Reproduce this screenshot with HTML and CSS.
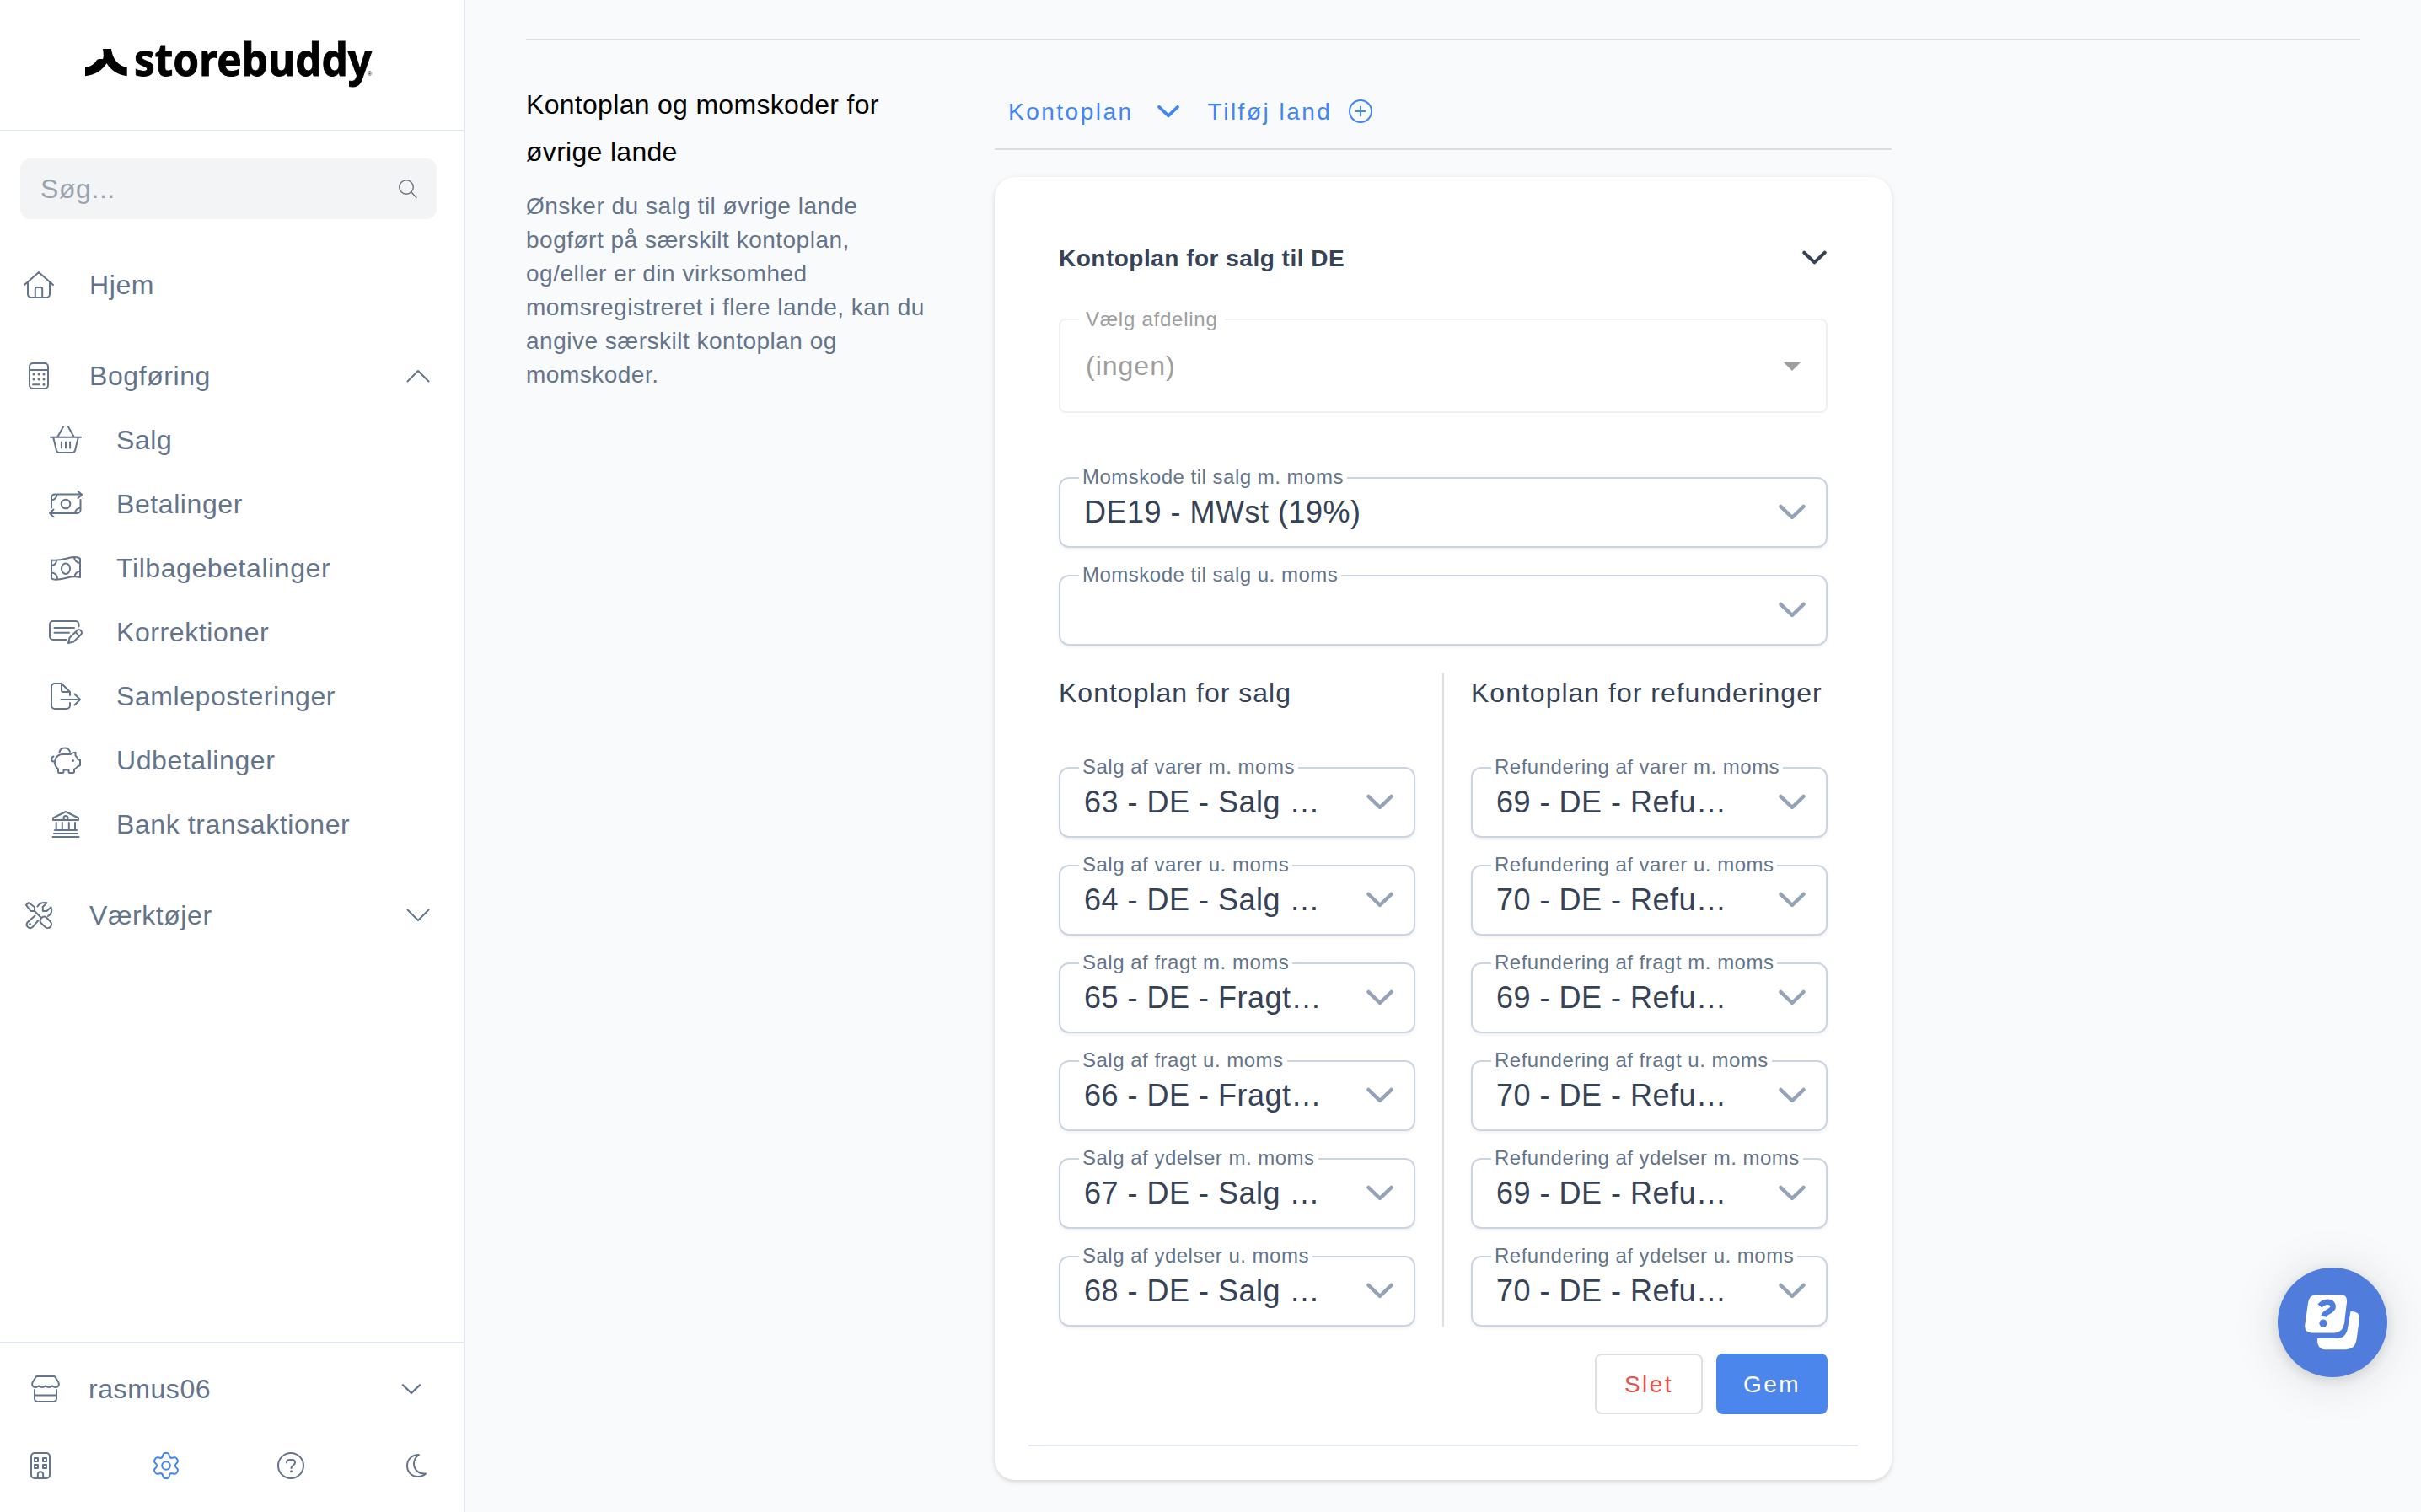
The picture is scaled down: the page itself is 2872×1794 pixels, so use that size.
FILE: index.html
```html
<!DOCTYPE html>
<html lang="da">

<head>
    <meta charset="utf-8">
    <title>Storebuddy</title>
    <link rel="stylesheet" href="styles.css">
</head>

<body>
    <svg class="sprite">
        <symbol id="chevron" viewBox="0 0 32 20">
            <path d="M2.500 3L16 16 29.500 3" />
        </symbol>
    </svg>

    <div class="layout">
        <aside class="sidebar">
            <div class="logo">
                <svg class="logo-image" width="346" height="110" viewBox="98 8 346 110">
                    <path d="M101 80C108 79 112 76 115 71Q116.500 70 118 70H122Q123.500 67 122 58H132C133.500 70 140 78 150.700 80V90.300C140 89 131 83 126.500 75C122 83 113 89 101 90.300Z" />
                    <text class="logo-text" x="159" y="90" textLength="282" lengthAdjust="spacingAndGlyphs">storebuddy</text>
                    <text class="logo-mark" x="436" y="90">®</text>
                </svg>
            </div>

            <div class="search">
                <span>Søg...</span>
                <svg class="icon thin" width="22" height="22" viewBox="0 0 22 22">
                    <circle cx="9" cy="9" r="8.300" />
                    <path d="M15 15L21 21.500" />
                </svg>
            </div>

            <nav class="menu">
                <a class="item">
                    <span class="item-icon"><svg class="icon" width="36" height="32" viewBox="0 0 36 32"><path d="M1 16L18 1 35 16M5 13V27a4 4 0 0 0 4 4H27a4 4 0 0 0 4-4V13M13.800 31V21a2 2 0 0 1 2-2h4.400a2 2 0 0 1 2 2V31" /></svg></span>
                    <span>Hjem</span>
                </a>
                <div class="group">
                    <a class="item">
                        <span class="item-icon"><svg class="icon" width="24" height="32" viewBox="0 0 24 32"><rect x="1" y="1" width="22" height="30" rx="4" /><path d="M1 9H23M5 26.200H13" /><path class="dots" d="M6 14h0M12 14h0M18 14h0M6 20h0M12 20h0M18 20h0M18 26.200h0" /></svg></span>
                        <span>Bogføring</span>
                        <svg class="icon arrow up" width="28" height="16" viewBox="0 0 28 16"><path d="M1.500 1.500L14 14 26.500 1.500" /></svg>
                    </a>
                    <a class="item sub">
                        <span class="item-icon"><svg class="icon" width="36" height="32" viewBox="0 0 36 32"><path d="M0 12.700H36M15 .500L8.500 12M21 .500L27.500 12M3.200 13L7 28.500Q7.700 31 10 31H26Q28.300 31 29 28.500L32.800 13M12.900 18.500V25.500M18 18.500V25.500M23.100 18.500V25.500" /></svg></span>
                        <span>Salg</span>
                    </a>
                    <a class="item sub">
                        <span class="item-icon"><svg class="icon" width="40" height="32" viewBox="0 0 40 32"><path d="M3 20.500V8.500a4 4 0 0 1 4-4H39M34.500 .800L39 5 34.500 9M37.500 11V23a4 4 0 0 1-4 4H1M5.500 22.500L1 27 5.500 31.200M9.300 5A6.400 6.400 0 0 1 3 11.300M37.500 20.700A6.400 6.400 0 0 0 31 27" /><circle cx="20" cy="16" r="5.300" /></svg></span>
                        <span>Betalinger</span>
                    </a>
                    <a class="item sub">
                        <span class="item-icon"><svg class="icon" width="36" height="29" viewBox="0 0 36 29"><path d="M1 4.500C10 6 18 2.500 25 1.300C29 .700 33 .800 35 3V25C26 22.500 20 26 11 27.300C7 28 2.500 28 1 26ZM7 5A6 6 0 0 1 1 11M28 1.300A7 7 0 0 0 35 8M1 19.500A7 7 0 0 1 8 27.500M35 18A6.500 6.500 0 0 0 28.500 24" /><ellipse cx="18" cy="14.700" rx="5" ry="6.300" /></svg></span>
                        <span>Tilbagebetalinger</span>
                    </a>
                    <a class="item sub">
                        <span class="item-icon"><svg class="icon" width="40" height="28" viewBox="0 0 40 28"><path d="M35.500 7.500V5a4 4 0 0 0-4-4H5a4 4 0 0 0-4 4V19a4 4 0 0 0 4 4H21M6.500 9H30M6.500 14.700H24M23 27L24.500 20.800 33.200 12.200a3.300 3.300 0 0 1 4.800 4.800L29.200 25.500ZM31.500 14L36 18.600" /></svg></span>
                        <span>Korrektioner</span>
                    </a>
                    <a class="item sub">
                        <span class="item-icon"><svg class="icon" width="36" height="32" viewBox="0 0 36 32"><path d="M23 24V27a4 4 0 0 1-4 4H5a4 4 0 0 1-4-4V5a4 4 0 0 1 4-4H13L23 11V15M13 1V9a2 2 0 0 0 2 2H23M12.500 20H35M28.500 13.500L35 20 28.500 26.500" /></svg></span>
                        <span>Samleposteringer</span>
                    </a>
                    <a class="item sub">
                        <span class="item-icon"><svg class="icon" width="36" height="32" viewBox="0 0 36 32"><path d="M10.500 6.500A6.500 6.500 0 0 1 23 6M15 9H23.500Q26 7 29.500 6.800V10.500Q32 12.500 32.700 15.500H35V22L32 23.500Q30.500 25.500 28 26.700V29.500Q28 31 26.500 31H23Q21.500 31 21.500 29.500V27.500H15.500V29.500Q15.500 31 14 31H10.500Q9 31 9 29.500V26.500C2 20.500 4.500 9 15 9ZM4.500 17.500C.500 18 0 12.500 3.500 11.500" /><path class="dots" d="M26.500 16.500h0" /></svg></span>
                        <span>Udbetalinger</span>
                    </a>
                    <a class="item sub">
                        <span class="item-icon"><svg class="icon" width="32" height="32" viewBox="0 0 32 32"><path d="M16 1L31 8.500V11H1V8.500ZM4.700 14V22.500M11.800 14V22.500M19.800 14V22.500M27 14V22.500M3 23H29M2 27H30M.500 31H31.500" /><circle cx="16" cy="8.500" r="2.600" /></svg></span>
                        <span>Bank transaktioner</span>
                    </a>
                </div>
                <a class="item">
                    <span class="item-icon"><svg class="icon" width="32" height="32" viewBox="0 0 32 32"><path d="M3.800 1L11 6.300V11H6.500L1 3.800ZM11 11L18.500 18.500M18.500 20L20 18.500Q22.500 16.500 25 18.500L30 23.800A4.400 4.400 0 0 1 23.800 30L18.500 25Q16.500 22.500 18.500 20ZM14.500 5.500C17 1.500 21.500 .500 25.500 1.300L20.800 6V11H25.500L30.500 6.300C32 10.500 30.800 14.500 27 17M11.500 16.500L2.400 24.500A4.200 4.200 0 0 0 8.300 30.300L15 22.500" /><path class="dots" d="M5.500 26.600h0" /></svg></span>
                    <span>Værktøjer</span>
                    <svg class="icon arrow" width="28" height="16" viewBox="0 0 28 16"><path d="M1.500 1.500L14 14 26.500 1.500" /></svg>
                </a>
            </nav>

            <div class="account">
                <div class="account-row">
                    <span class="item-icon"><svg class="icon" width="34" height="32" viewBox="0 0 34 32"><path d="M7.200 1H26.800Q28 1 28.600 2L32.300 8C34 11 32 14 29 14Q26.500 14 25 12.300Q23.500 14 21 14Q18.500 14 17 12.300Q15.500 14 13 14Q10.500 14 9 12.300Q7.500 14 5 14C2 14 0 11 1.700 8L5.400 2Q6 1 7.200 1ZM4 17V27.500A3.500 3.500 0 0 0 7.500 31H26.500A3.500 3.500 0 0 0 30 27.500V17M4 23.500H30" /></svg></span>
                    <span>rasmus06</span>
                    <svg class="icon account-arrow" width="24" height="15"><use href="#chevron" /></svg>
                </div>
                <div class="tools">
                    <span class="tool"><svg class="icon" width="24" height="32" viewBox="0 0 24 32"><rect x="1" y="1" width="22" height="30" rx="4" /><path d="M5 7h4v4h-4zM15 7h4v4h-4zM5 15h4v4h-4zM15 15h4v4h-4zM8.800 31V26.500a3.200 3.200 0 0 1 6.400 0V31" /></svg></span>
                    <span class="tool active"><svg class="icon" width="30" height="32" viewBox="0 0 30 32"><path d="M11.500 2.800Q12 1 13.500 1H16.500Q18 1 18.500 2.800L19.300 5.500Q20 7.200 22 6.800L25 6.200Q26.700 6 27.500 7.400L28.800 9.600Q29.500 11 28.300 12.300L26.400 14.400Q25.200 16 26.400 17.600L28.300 19.700Q29.500 21 28.800 22.400L27.500 24.600Q26.700 26 25 25.800L22 25.200Q20 24.800 19.300 26.500L18.500 29.200Q18 31 16.500 31H13.500Q12 31 11.500 29.200L10.700 26.500Q10 24.800 8 25.200L5 25.800Q3.300 26 2.500 24.600L1.200 22.400Q.500 21 1.700 19.700L3.600 17.600Q4.800 16 3.600 14.400L1.700 12.300Q.500 11 1.200 9.600L2.500 7.400Q3.300 6 5 6.200L8 6.800Q10 7.200 10.700 5.500Z" /><circle cx="15" cy="16" r="4.800" /></svg></span>
                    <span class="tool"><svg class="icon" width="32" height="32" viewBox="0 0 32 32"><circle cx="16" cy="16" r="15" /><path d="M11 12.500C11 10 12.500 9 14.500 9H17.500C19.500 9 21 10.300 21 12.500C21 15.500 16.500 15.500 16.500 19" /><path class="dots" d="M16.500 22.800h0" /></svg></span>
                    <span class="tool"><svg class="icon" width="24" height="28" viewBox="0 0 24 28"><path d="M15 1C6 1 1 7 1 14C1 22 7 27 13.500 27C17.500 27 21 25.500 23 23.500C14 24.500 9 18 9 11.500C9 7 11.500 3.500 15 1Z" /></svg></span>
                </div>
            </div>
        </aside>

        <main class="main">
            <hr class="line">
            <div class="section">
                <div class="intro">
                    <h2>Kontoplan og momskoder for øvrige lande</h2>
                    <p>Ønsker du salg til øvrige lande bogført på særskilt kontoplan, og/eller er din virksomhed momsregistreret i flere lande, kan du angive særskilt kontoplan og momskoder.</p>
                </div>

                <div class="content">
                    <div class="tabs">
                        <a class="tab">Kontoplan <svg class="icon tab-arrow" width="26" height="17"><use href="#chevron" /></svg></a>
                        <a class="tab">Tilføj land <svg class="icon tab-plus" width="28" height="28" viewBox="0 0 28 28"><circle cx="14" cy="14" r="13" /><path d="M14 8.500V19.500M8.500 14H19.500" /></svg></a>
                    </div>

                    <div class="card">
                        <div class="card-title">
                            <span>Kontoplan for salg til DE</span>
                            <svg class="icon title-arrow" width="29" height="18"><use href="#chevron" /></svg>
                        </div>

                        <div class="field disabled">
                            <label>Vælg afdeling</label>
                            <span class="value">(ingen)</span>
                            <span class="caret"></span>
                        </div>

                        <div class="fields">
                            <div class="field">
                                <label>Momskode til salg m. moms</label>
                                <span class="value">DE19 - MWst (19%)</span>
                                <svg class="icon field-arrow" width="32" height="20"><use href="#chevron" /></svg>
                            </div>
                            <div class="field">
                                <label>Momskode til salg u. moms</label>
                                <span class="value"></span>
                                <svg class="icon field-arrow" width="32" height="20"><use href="#chevron" /></svg>
                            </div>
                        </div>

                        <div class="columns">
                            <div class="column">
                                <h3>Kontoplan for salg</h3>
                                <div class="fields">
                                    <div class="field">
                                        <label>Salg af varer m. moms</label>
                                        <span class="value">63 - DE - Salg …</span>
                                        <svg class="icon field-arrow" width="32" height="20"><use href="#chevron" /></svg>
                                    </div>
                                    <div class="field">
                                        <label>Salg af varer u. moms</label>
                                        <span class="value">64 - DE - Salg …</span>
                                        <svg class="icon field-arrow" width="32" height="20"><use href="#chevron" /></svg>
                                    </div>
                                    <div class="field">
                                        <label>Salg af fragt m. moms</label>
                                        <span class="value">65 - DE - Fragt…</span>
                                        <svg class="icon field-arrow" width="32" height="20"><use href="#chevron" /></svg>
                                    </div>
                                    <div class="field">
                                        <label>Salg af fragt u. moms</label>
                                        <span class="value">66 - DE - Fragt…</span>
                                        <svg class="icon field-arrow" width="32" height="20"><use href="#chevron" /></svg>
                                    </div>
                                    <div class="field">
                                        <label>Salg af ydelser m. moms</label>
                                        <span class="value">67 - DE - Salg …</span>
                                        <svg class="icon field-arrow" width="32" height="20"><use href="#chevron" /></svg>
                                    </div>
                                    <div class="field">
                                        <label>Salg af ydelser u. moms</label>
                                        <span class="value">68 - DE - Salg …</span>
                                        <svg class="icon field-arrow" width="32" height="20"><use href="#chevron" /></svg>
                                    </div>
                                </div>
                            </div>
                            <div class="divider"></div>
                            <div class="column">
                                <h3>Kontoplan for refunderinger</h3>
                                <div class="fields">
                                    <div class="field">
                                        <label>Refundering af varer m. moms</label>
                                        <span class="value">69 - DE - Refu…</span>
                                        <svg class="icon field-arrow" width="32" height="20"><use href="#chevron" /></svg>
                                    </div>
                                    <div class="field">
                                        <label>Refundering af varer u. moms</label>
                                        <span class="value">70 - DE - Refu…</span>
                                        <svg class="icon field-arrow" width="32" height="20"><use href="#chevron" /></svg>
                                    </div>
                                    <div class="field">
                                        <label>Refundering af fragt m. moms</label>
                                        <span class="value">69 - DE - Refu…</span>
                                        <svg class="icon field-arrow" width="32" height="20"><use href="#chevron" /></svg>
                                    </div>
                                    <div class="field">
                                        <label>Refundering af fragt u. moms</label>
                                        <span class="value">70 - DE - Refu…</span>
                                        <svg class="icon field-arrow" width="32" height="20"><use href="#chevron" /></svg>
                                    </div>
                                    <div class="field">
                                        <label>Refundering af ydelser m. moms</label>
                                        <span class="value">69 - DE - Refu…</span>
                                        <svg class="icon field-arrow" width="32" height="20"><use href="#chevron" /></svg>
                                    </div>
                                    <div class="field">
                                        <label>Refundering af ydelser u. moms</label>
                                        <span class="value">70 - DE - Refu…</span>
                                        <svg class="icon field-arrow" width="32" height="20"><use href="#chevron" /></svg>
                                    </div>
                                </div>
                            </div>
                        </div>

                        <div class="actions">
                            <button class="btn btn-delete">Slet</button>
                            <button class="btn btn-save">Gem</button>
                        </div>
                        <hr class="card-line">
                    </div>
                </div>
            </div>
        </main>
    </div>

    <div class="help">
        <svg width="66" height="66" viewBox="0 0 66 66">
            <path fill="#fff" d="M14 0H42Q51 0 50 9L47 34Q45.500 45 35 45.500H8Q-.500 45 .300 36L4 10Q5.500 0 14 0Z" />
            <path fill="#fff" d="M54.500 20Q65.500 20 65 28L61.500 54Q59.500 65 49 65.300H24Q14.500 65 15 52H38Q49 52 51 40Z" />
            <path class="help-mark" d="M18 13.500Q22 8.500 27.500 8.700C34 9 35.500 15 31 18.500C27.500 21 23.500 21.500 22.500 26" />
            <circle class="help-dot" cx="22" cy="34" r="4.600" />
        </svg>
    </div>
</body>

</html>
```
FILE: styles.css
```css
* {
    box-sizing: border-box;
}

body {
    margin: 0;
    background: #f9fafc;
    font-family: "Liberation Sans", Arial, sans-serif;
    font-size: 32px;
    color: #364256;
    overflow: hidden;
}

h2,
h3,
p,
hr {
    margin: 0;
    border: none;
    font-weight: normal;
}

.sprite {
    display: none;
}

.layout {
    display: flex;
    height: 1794px;
}

.icon {
    display: block;
    flex: none;
    fill: none;
    stroke: currentColor;
    stroke-width: 2;
    stroke-linecap: round;
    stroke-linejoin: round;
    overflow: visible;
}

.icon .dots {
    stroke-width: 3;
}

.icon.thin {
    stroke-width: 1.4;
}

/* Sidebar */
.sidebar {
    display: flex;
    flex-direction: column;
    flex: none;
    width: 552px;
    background: #fff;
    border-right: 2px solid #e2e8f0;
    color: #64748b;
    letter-spacing: 0.58px;
}

.logo {
    height: 156px;
    padding: 8px 0 0 98px;
    border-bottom: 2px solid #e2e8f0;
}

.logo-image {
    display: block;
    overflow: visible;
}

.logo-text {
    font-family: "Noto Sans", "Open Sans", sans-serif;
    font-size: 54px;
    font-weight: 700;
    letter-spacing: 0;
    stroke: #000;
    stroke-width: 1;
}

.logo-mark {
    font-size: 7px;
    letter-spacing: 0;
}

.search {
    display: flex;
    align-items: center;
    justify-content: space-between;
    height: 72px;
    margin: 32px 32px 40px 24px;
    padding: 0 23px 0 24px;
    border-radius: 12px;
    background: #f3f4f6;
    color: #9ca3af;
}

.search .icon {
    color: #6b7280;
}

.menu {
    display: flex;
    flex-direction: column;
    gap: 32px;
    flex: 1;
}

.item {
    display: flex;
    align-items: center;
    height: 76px;
    padding: 0 40px 0 26px;
}

.item.sub {
    padding-left: 58px;
}

.item-icon {
    display: flex;
    justify-content: center;
    width: 40px;
    margin-right: 40px;
}

.arrow {
    margin-left: auto;
}

.up {
    transform: rotate(180deg);
}

.account {
    height: 202px;
    border-top: 2px solid #e2e8f0;
    padding: 16px 40px 0 32px;
}

.account-row {
    display: flex;
    align-items: center;
    height: 76px;
    padding-right: 10px;
}

.account-row .item-icon {
    width: 44px;
    margin-right: 29px;
}

.account-arrow {
    margin-left: auto;
    stroke-width: 3.2;
}

.tools {
    display: flex;
    justify-content: space-between;
    padding-top: 33px;
}

.tool {
    display: flex;
    align-items: center;
    justify-content: center;
    width: 32px;
    height: 40px;
}

.tool.active {
    color: #4285f4;
}

/* Main content */
.main {
    flex: 1;
    padding: 46px 72px 0;
}

.line {
    height: 2px;
    background: #dadce0;
}

.section {
    display: flex;
    padding-top: 48px;
}

.intro {
    width: 556px;
    padding-right: 76px;
}

.intro h2 {
    margin-bottom: 17px;
    font-size: 32px;
    line-height: 56px;
    letter-spacing: 0.3px;
    color: #000;
}

.intro p {
    font-size: 28px;
    line-height: 40px;
    letter-spacing: 0.5px;
    color: #64748b;
}

.content {
    width: 1064px;
}

.tabs {
    display: flex;
    align-items: center;
    height: 82px;
    padding: 0 16px 6px;
    border-bottom: 2px solid #dadce0;
    font-size: 28px;
    letter-spacing: 2.5px;
    color: #4285f4;
}

.tab {
    display: flex;
    align-items: center;
}

.tab-arrow {
    margin: 0 34px 2px 28px;
    stroke-width: 4.5;
}

.tab-plus {
    margin: 0 0 2px 20px;
}

.card {
    height: 1546px;
    margin-top: 32px;
    padding: 73px 76px 0;
    border-radius: 24px;
    background: #fff;
    box-shadow: 0 2px 6px rgba(0, 0, 0, 0.12), 0 2px 4px rgba(0, 0, 0, 0.04);
}

.card-title {
    display: flex;
    align-items: center;
    justify-content: space-between;
    height: 48px;
    margin-bottom: 47px;
    font-size: 28px;
    font-weight: bold;
    letter-spacing: 0.5px;
}

.title-arrow {
    margin: 0 1px 2px 0;
    stroke-width: 4.5;
}

.fields {
    display: flex;
    flex-direction: column;
    gap: 32px;
}

.field {
    position: relative;
    display: flex;
    align-items: center;
    justify-content: space-between;
    height: 84px;
    padding: 0 24px 0 28px;
    border: 2px solid #cbd5e1;
    border-radius: 12px;
    background: #fff;
    box-shadow: 0 2px 4px rgba(0, 0, 0, 0.06);
}

/* label sits on top of the border */
.field label {
    position: absolute;
    top: -17px;
    left: 22px;
    padding: 0 4px;
    background: #fff;
    font-size: 24px;
    line-height: 30px;
    letter-spacing: 0.5px;
    color: #64748b;
}

.field .value {
    font-size: 36px;
    letter-spacing: 0.5px;
    white-space: nowrap;
}

.field-arrow {
    color: #94a3b8;
    stroke-width: 4.5;
}

.field.disabled {
    height: 112px;
    margin-bottom: 76px;
    padding: 0 30px;
    border-color: #f0f0f0;
    border-radius: 8px;
    box-shadow: none;
}

.field.disabled label {
    top: -16px;
    padding: 0 8px;
    letter-spacing: 0.75px;
    color: #9e9e9e;
}

.field.disabled .value {
    font-size: 32px;
    letter-spacing: 1px;
    color: #9e9e9e;
}

.caret {
    margin-top: 2px;
    border: 10px solid transparent;
    border-top-color: #9e9e9e;
    border-bottom: none;
}

.columns {
    display: flex;
    gap: 32px;
    margin-top: 32px;
}

.column {
    flex: 1;
}

.column h3 {
    margin-bottom: 64px;
    font-size: 32px;
    line-height: 48px;
    letter-spacing: 1px;
    white-space: nowrap;
}

.divider {
    width: 2px;
    background: #dedede;
}

.actions {
    display: flex;
    justify-content: flex-end;
    gap: 16px;
    margin-top: 32px;
}

.btn {
    height: 72px;
    padding: 1px 0 0;
    border: none;
    border-radius: 8px;
    font-family: inherit;
    font-size: 28px;
    letter-spacing: 2.5px;
}

.btn-delete {
    width: 128px;
    border: 2px solid #e0e0e0;
    background: #fff;
    color: #e5534b;
}

.btn-save {
    width: 132px;
    background: #4b86ed;
    color: #fff;
}

.card-line {
    height: 2px;
    margin: 36px -36px 0;
    background: #e2e8f0;
}

/* Floating help button */
.help {
    position: fixed;
    right: 40px;
    bottom: 160px;
    display: flex;
    align-items: center;
    justify-content: center;
    width: 130px;
    height: 130px;
    border-radius: 50%;
    background: #507cdc;
    box-shadow: 0 4px 16px rgba(0, 0, 0, 0.12), 0 4px 60px rgba(0, 0, 0, 0.12);
}

.help-mark {
    fill: none;
    stroke: #507cdc;
    stroke-width: 6.5;
}

.help-dot {
    fill: #507cdc;
}
```
